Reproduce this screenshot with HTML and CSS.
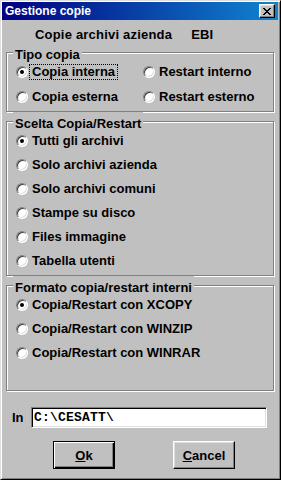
FILE: index.html
```html
<html>
    <head>
        <title>Gestione copie</title>
        <link rel="stylesheet" href="styles.css">
    </head>
    <body>
        <div class="window">
            <div class="titlebar">
                <span class="title">Gestione copie</span>
                <span class="close">
                    <svg width="8" height="7" viewBox="0 0 8 7">
                        <path d="M0 0h2v1h-2z M6 0h2v1h-2z M1 1h2v1h-2z M5 1h2v1h-2z M2 2h4v1h-4z M3 3h2v1h-2z M2 4h4v1h-4z M1 5h2v1h-2z M5 5h2v1h-2z M0 6h2v1h-2z M6 6h2v1h-2z" fill="#000"/>
                    </svg>
                </span>
            </div>

            <div class="heading">
                <span>Copie archivi azienda</span>
                <span class="code">EBI</span>
            </div>

            <fieldset class="group">
                <legend>Tipo copia</legend>
                <div class="cols">
                    <div class="opt"><span class="radio on"></span><span class="caption focus">Copia interna</span></div>
                    <div class="opt"><span class="radio"></span><span class="caption">Restart interno</span></div>
                    <div class="opt"><span class="radio"></span><span class="caption">Copia esterna</span></div>
                    <div class="opt"><span class="radio"></span><span class="caption">Restart esterno</span></div>
                </div>
            </fieldset>

            <fieldset class="group">
                <legend>Scelta Copia/Restart</legend>
                <div class="list">
                    <div class="opt"><span class="radio on"></span><span class="caption">Tutti gli archivi</span></div>
                    <div class="opt"><span class="radio"></span><span class="caption">Solo archivi azienda</span></div>
                    <div class="opt"><span class="radio"></span><span class="caption">Solo archivi comuni</span></div>
                    <div class="opt"><span class="radio"></span><span class="caption">Stampe su disco</span></div>
                    <div class="opt"><span class="radio"></span><span class="caption">Files immagine</span></div>
                    <div class="opt"><span class="radio"></span><span class="caption">Tabella utenti</span></div>
                </div>
            </fieldset>

            <fieldset class="group formato">
                <legend>Formato copia/restart interni</legend>
                <div class="list">
                    <div class="opt"><span class="radio on"></span><span class="caption">Copia/Restart con XCOPY</span></div>
                    <div class="opt"><span class="radio"></span><span class="caption">Copia/Restart con WINZIP</span></div>
                    <div class="opt"><span class="radio"></span><span class="caption">Copia/Restart con WINRAR</span></div>
                </div>
            </fieldset>

            <div class="path-row">
                <span class="path-label">In</span>
                <div class="field">C:\CESATT\</div>
            </div>

            <div class="buttons">
                <button class="btn default"><u>O</u>k</button>
                <button class="btn"><u>C</u>ancel</button>
            </div>
        </div>
    </body>
</html>
```

FILE: styles.css
```css
body {
    margin: 0;
    background-color: #c0c0c0;
    font-family: "Liberation Sans", Arial, sans-serif;
    font-size: 13px;
    font-weight: bold;
    color: #000;
}
.window {
    width: 281px;
    height: 480px;
    box-sizing: border-box;
    border: 1px solid;
    border-color: #dfdfdf #000 #000 #dfdfdf;
    box-shadow: inset 1px 1px 0 #fff, inset -1px -1px 0 #808080;
    padding: 1px 2px 2px 1px;
    background-color: #c0c0c0;
}
.titlebar {
    height: 18px;
    display: flex;
    align-items: center;
    padding: 0 3px 0 3px;
    background: linear-gradient(to right, #000080, #1084d0);
}
.title {
    color: #fff;
    font-size: 12px;
    line-height: 14px;
}
.close {
    margin-left: auto;
    width: 16px;
    height: 14px;
    box-sizing: border-box;
    display: flex;
    align-items: center;
    justify-content: center;
    background-color: #c0c0c0;
    border: 1px solid;
    border-color: #fff #000 #000 #fff;
    box-shadow: inset -1px -1px 0 #808080, inset 1px 1px 0 #dfdfdf;
}
.heading {
    display: flex;
    line-height: 15px;
    margin-top: 7px;
    padding-left: 33px;
    letter-spacing: 0.2px;
}
.code {
    margin-left: 19px;
}
.group {
    margin: 1px 4px 0 4px;
    padding: 0 4px 4px 9px;
    min-width: 0;
    border: 1px solid #808080;
    box-shadow: 1px 1px 0 #fff, inset 1px 1px 0 #fff;
}
.group + .group {
    margin-top: 0;
}
.group legend {
    margin-left: -3px;
    padding: 4px 2px 0 2px;
    line-height: 15px;
    background-color: #c0c0c0;
}
.cols {
    display: grid;
    grid-template-columns: 127px 1fr;
    row-gap: 5px;
}
.list {
    display: flex;
    flex-direction: column;
    gap: 4px;
}
.formato {
    margin-top: 3px;
    padding-bottom: 27px;
}
.opt {
    display: flex;
    align-items: center;
    height: 20px;
}
.radio {
    position: relative;
    flex: none;
    width: 12px;
    height: 12px;
    box-sizing: border-box;
    border-radius: 50%;
    background-color: #fff;
    border: 1px solid;
    border-color: #808080 #fff #fff #808080;
    box-shadow: inset 1px 1px 0 #404040, inset -1px -1px 0 #dfdfdf;
}
.radio.on::after {
    content: "";
    position: absolute;
    left: 3px;
    top: 3px;
    width: 4px;
    height: 4px;
    border-radius: 50%;
    background-color: #000;
}
.caption {
    margin-left: 1px;
    padding: 0 2px;
    line-height: 14px;
    border: 1px dotted transparent;
    white-space: nowrap;
}
.caption.focus {
    border-color: #000;
}
.path-row {
    display: flex;
    align-items: center;
    margin-top: 16px;
    padding-left: 10px;
}
.path-label {
    width: 19px;
}
.field {
    width: 236px;
    height: 21px;
    box-sizing: border-box;
    border: 1px solid;
    border-color: #808080 #fff #fff #808080;
    box-shadow: inset 1px 1px 0 #000, inset -1px -1px 0 #dfdfdf;
    background-color: #fff;
    padding: 2px 0 0 2px;
    font-family: "Liberation Mono", "Courier New", monospace;
    font-size: 13px;
    letter-spacing: 0.2px;
    line-height: 16px;
}
.buttons {
    display: flex;
    gap: 58px;
    margin-top: 13px;
    padding-left: 51px;
}
.btn {
    width: 62px;
    height: 28px;
    box-sizing: border-box;
    font-family: "Liberation Sans", Arial, sans-serif;
    font-size: 13px;
    font-weight: bold;
    color: #000;
    background-color: #c0c0c0;
    border: 1px solid;
    border-color: #fff #000 #000 #fff;
    box-shadow: inset -1px -1px 0 #808080, inset 1px 1px 0 #dfdfdf;
    padding: 0;
}
.btn.default {
    border: 1px solid #000;
    box-shadow: inset 1px 1px 0 #fff, inset -1px -1px 0 #000, inset -2px -2px 0 #808080;
}
```
